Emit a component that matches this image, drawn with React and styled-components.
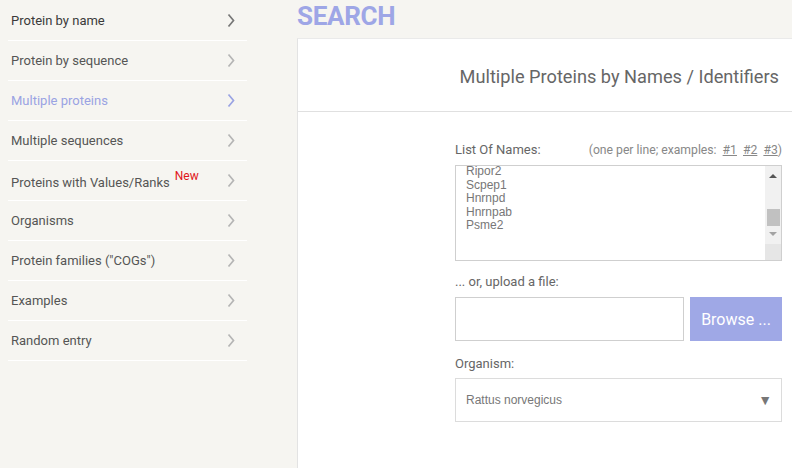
import React from 'react'
import styled, { createGlobalStyle } from 'styled-components'

const Global = createGlobalStyle`
  html, body {
    margin: 0;
    padding: 0;
    background: #f6f5f1;
    font-family: Roboto, 'Liberation Sans', sans-serif;
    overflow: hidden;
  }
`

const Layout = styled.div`
  display: flex;
  width: 792px;
  height: 468px;
  overflow: hidden;
`

const Side = styled.nav`
  width: 239px;
  padding: 1px 0 0 8px;
  flex-shrink: 0;
`

const Item = styled.div`
  display: flex;
  align-items: center;
  justify-content: space-between;
  height: 40px;
  box-sizing: border-box;
  border-bottom: 1px solid #ffffff;
  padding: 0 11px 0 3px;
  font-size: 13px;
  color: ${(p) => (p.active ? '#9aa3e3' : p.dark ? '#3a3a3a' : '#555')};
`

const NewTag = styled.sup`
  color: #e0161b;
  font-size: 12px;
  margin-left: 5px;
  position: relative;
  top: -2px;
`

const Main = styled.main`
  flex: 1;
  padding-left: 50px;
  display: flex;
  flex-direction: column;
`

const Title = styled.h1`
  margin: 0;
  height: 38px;
  font-size: 26px;
  line-height: 32px;
  font-weight: 700;
  color: #9ea6e6;
  letter-spacing: -0.3px;
`

const Card = styled.section`
  flex: 1;
  background: #fff;
  border-left: 1px solid #e3e3e3;
  border-top: 1px solid #eaeaea;
  width: 520px;
`

const CardHead = styled.div`
  height: 73px;
  border-bottom: 1px solid #e0e0e0;
  display: flex;
  align-items: center;
  justify-content: flex-end;
  padding-right: 14px;
  box-sizing: border-box;
  width: 495px;
`

const HeadText = styled.h2`
  margin: 0;
  font-size: 18.2px;
  font-weight: 400;
  color: #666;
  position: relative;
  top: 1px;
`

const Form = styled.div`
  width: 327px;
  margin-left: 157px;
  padding-top: 30px;
  display: flex;
  flex-direction: column;
`

const LabelRow = styled.div`
  display: flex;
  justify-content: space-between;
  align-items: baseline;
  font-size: 13px;
  line-height: 16px;
  color: #666;
  height: 16px;
  margin-bottom: ${(p) => p.mb}px;
`

const Hint = styled.span`
  font-size: 12.2px;
  color: #888;
  a {
    color: #888;
    text-decoration: underline;
    margin-left: 3px;
  }
`

const TextBox = styled.div`
  height: 96px;
  border: 1px solid #cfcfcf;
  box-sizing: border-box;
  display: flex;
  overflow: hidden;
`

const Lines = styled.div`
  flex: 1;
  padding: 0 10px;
  margin-top: -1px;
  font-size: 12px;
  line-height: 13.5px;
  color: #777;
  font-family: 'Liberation Sans', Arial, sans-serif;
`

const Scroll = styled.div`
  width: 16px;
  background: #f1f1f1;
  display: flex;
  flex-direction: column;
  align-items: center;
`

const Arrow = styled.div`
  width: 0;
  height: 0;
  border-left: 4px solid transparent;
  border-right: 4px solid transparent;
  ${(p) => (p.up ? 'border-bottom: 4px solid #555;' : 'border-top: 4px solid #a3a3a3;')}
  margin-top: ${(p) => p.mt}px;
`

const Thumb = styled.div`
  width: 13px;
  height: 17px;
  background: #c1c1c1;
  margin-top: 31px;
`

const Grip = styled.div`
  margin-top: auto;
  width: 16px;
  height: 16px;
  background: #e6e6e6;
`

const Gap = styled.div`
  height: ${(p) => p.h}px;
`

const UploadRow = styled.div`
  display: flex;
  gap: 6px;
  height: 44px;
`

const FileInput = styled.div`
  flex: 1;
  border: 1px solid #cfcfcf;
  box-sizing: border-box;
`

const Browse = styled.button`
  width: 92px;
  border: none;
  background: #9fa8e6;
  color: #fff;
  font-family: Roboto, 'Liberation Sans', sans-serif;
  font-size: 16px;
  padding: 0;
`

const Select = styled.div`
  height: 44px;
  border: 1px solid #dcdcdc;
  box-sizing: border-box;
  display: flex;
  align-items: center;
  justify-content: space-between;
  padding: 0 9px 0 10px;
  font-family: 'Liberation Sans', Arial, sans-serif;
  font-size: 12px;
  color: #777;
`

const Caret = styled.span`
  font-size: 14px;
  color: #777;
`

const Chevron = ({ color }) => (
  <svg width="10" height="15" viewBox="0 0 10 15">
    <path d="M2.5 1.5 L7.5 7.5 L2.5 13.5" fill="none" stroke={color} strokeWidth="1.7" />
  </svg>
)

const menu = [
  'Protein by name',
  'Protein by sequence',
  'Multiple proteins',
  'Multiple sequences',
  'Proteins with Values/Ranks',
  'Organisms',
  'Protein families ("COGs")',
  'Examples',
  'Random entry',
]

const names = ['Ripor2', 'Scpep1', 'Hnrnpd', 'Hnrnpab', 'Psme2']

export default function App() {
  return (
    <Layout>
      <Global />
      <Side>
        {menu.map((m, i) => (
          <Item key={m} active={i === 2} dark={i === 0}>
            <span>
              {m}
              {i === 4 && <NewTag>New</NewTag>}
            </span>
            <Chevron color={i === 2 ? '#9aa3e3' : i === 0 ? '#777' : '#b5b5b5'} />
          </Item>
        ))}
      </Side>
      <Main>
        <Title>SEARCH</Title>
        <Card>
          <CardHead>
            <HeadText>Multiple Proteins by Names / Identifiers</HeadText>
          </CardHead>
          <Form>
            <LabelRow mb={7}>
              <span>List Of Names:</span>
              <Hint>
                (one per line; examples: <a>#1</a> <a>#2</a> <a>#3</a>)
              </Hint>
            </LabelRow>
            <TextBox>
              <Lines>
                {names.map((n) => (
                  <div key={n}>{n}</div>
                ))}
              </Lines>
              <Scroll>
                <Arrow up mt={8} />
                <Thumb />
                <Arrow mt={6} />
                <Grip />
              </Scroll>
            </TextBox>
            <Gap h={13} />
            <LabelRow mb={7}>
              <span>... or, upload a file:</span>
            </LabelRow>
            <UploadRow>
              <FileInput />
              <Browse>Browse ...</Browse>
            </UploadRow>
            <Gap h={15} />
            <LabelRow mb={6}>
              <span>Organism:</span>
            </LabelRow>
            <Select>
              <span>Rattus norvegicus</span>
              <Caret>▼</Caret>
            </Select>
          </Form>
        </Card>
      </Main>
    </Layout>
  )
}
